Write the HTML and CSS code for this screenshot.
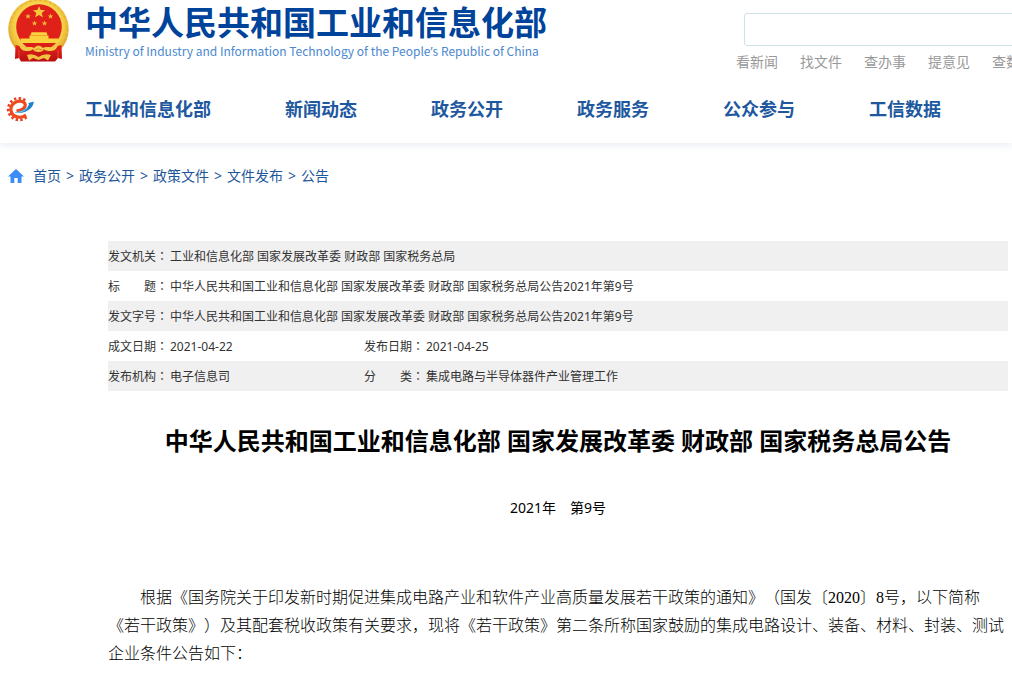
FILE: index.html
```
<!DOCTYPE html>
<html lang="zh-CN">
<head>
<meta charset="utf-8">
<meta name="viewport" content="width=device-width, initial-scale=1">
<title>中华人民共和国工业和信息化部</title>
<link rel="stylesheet" href="styles.css">
</head>
<body>
<header class="header">
  <div class="masthead">
    <a class="brand" href="#">
      <svg class="emblem" viewBox="0 0 62 63" aria-hidden="true">
        <defs>
          <radialGradient id="gold" cx="50%" cy="45%" r="55%">
            <stop offset="70%" stop-color="#f7d44c"/>
            <stop offset="90%" stop-color="#e8b534"/>
            <stop offset="100%" stop-color="#d99d28"/>
          </radialGradient>
          <linearGradient id="cloth" x1="0" y1="0" x2="0" y2="1">
            <stop offset="0" stop-color="#e3261c"/>
            <stop offset="1" stop-color="#b80f10"/>
          </linearGradient>
        </defs>
        <circle cx="30.5" cy="29" r="30.3" fill="url(#gold)"/>
        <circle cx="30.5" cy="29" r="28.5" fill="none" stroke="#dda632" stroke-width="1" stroke-dasharray="2 3"/>
        <path d="M7.500 45 L20 48 L30.500 46 L41 48 L53.500 45 L54 59 L50 58 L47 61.500 L13 61.500 L11 58 L7 59Z" fill="url(#cloth)"/>
        <circle cx="31" cy="27" r="22.8" fill="#df2119"/>
        <path d="M13.500 42 H49 C44 48 38 50 31 50 S18 48 13.500 42Z" fill="#dc1f19"/>
        <path d="M31 6l1.700 4 4.400.3-3.400 2.700 1.200 4.300-3.900-2.400-3.900 2.400 1.200-4.300-3.400-2.700 4.400-.3z" fill="#f8c83a"/>
        <g fill="#f3b735">
          <path d="M20 13.500l.8 1.900 2 .1-1.600 1.200.6 2-1.800-1.100-1.800 1.100.6-2-1.600-1.200 2-.1z"/>
          <path d="M42.500 13.500l.8 1.900 2 .1-1.600 1.200.6 2-1.800-1.100-1.800 1.100.6-2-1.600-1.200 2-.1z"/>
          <path d="M26.500 20.500l.8 1.900 2 .1-1.600 1.200.6 2-1.800-1.100-1.800 1.100.6-2-1.600-1.200 2-.1z"/>
          <path d="M36.500 20.500l.8 1.900 2 .1-1.600 1.200.6 2-1.800-1.100-1.800 1.100.6-2-1.600-1.200 2-.1z"/>
        </g>
        <path d="M23.500 32.200h15l1 3H22.500z M21.500 35.500h19v3h10V43H12.500v-4.500h9z" fill="#fbd13d"/>
        <path d="M22.500 35.500h17" stroke="#e7a52b" stroke-width=".6"/>
        <path d="M11 44 C17 50 22 45 26 48 Q30.500 43 35 48 C39 45 44 50 50 44 Q49 51 43 51 Q37 51 36 49 Q35 52 30.500 52 Q26 52 25 49 Q24 51 18 51 Q12 51 11 44Z" fill="#f4ca48"/>
        <path d="M27 50 Q30.500 47.500 34 50" fill="none" stroke="#dd8e23"/>
        <path d="M19 55 Q25 53 30.500 57 Q36 53 43 55 L40 60.500 L36 58 L30.500 60 L25 58 L21 60.500Z" fill="#f2c142"/>
        <path d="M11 50v8M50 50v8" stroke="#ee4537" stroke-width="1"/>
      </svg>
      <span class="brand-text">
        <span class="brand-name">中华人民共和国工业和信息化部</span>
        <span class="brand-sub">Ministry of Industry and Information Technology of the People<span class="apos">’</span>s Republic of China</span>
      </span>
    </a>
    <form class="search">
      <input class="search-box" type="text" aria-label="搜索">
      <div class="quick">
        <a href="#">看新闻</a>
        <a href="#">找文件</a>
        <a href="#">查办事</a>
        <a href="#">提意见</a>
        <a href="#">查数据</a>
      </div>
    </form>
  </div>
  <nav class="nav" aria-label="主导航">
    <a class="nav-logo" href="#" aria-label="工信微报">
      <svg viewBox="0 0 30 28" aria-hidden="true">
        <path d="M21.500 22 A10.800 10.800 0 1 1 20.500 5.500" fill="none" stroke="#e8401c" stroke-width="2.800" stroke-dasharray="2.400 2.200"/>
        <path d="M21 20 C16 24 7 22.500 6 15.500 C5 8.500 13 4 18.500 7.200 C22.500 9.700 19.500 15 11.500 15.800" fill="none" stroke="#ee4b1f" stroke-width="3.200"/>
        <path d="M10 17.600 C18 19.500 28.500 14.500 28.800 6.500 L23.500 8 C25.500 11 19 16 10 17.600Z" fill="#1c83cb"/>
        <path d="M10 17.600 C16 17.600 20 15.500 22.500 13" fill="none" stroke="#83c9ec" stroke-width="1"/>
      </svg>
    </a>
    <a href="#">工业和信息化部</a>
    <a href="#">新闻动态</a>
    <a href="#">政务公开</a>
    <a href="#">政务服务</a>
    <a href="#">公众参与</a>
    <a href="#">工信数据</a>
  </nav>
</header>

<nav class="crumbs" aria-label="当前位置">
  <svg class="home" viewBox="0 0 16 14" aria-hidden="true"><path d="M8 0 L16 7.500 H13.500 V14 H9.700 V9 H6.300 V14 H2.500 V7.500 H0Z" fill="#3d8bf5"/></svg>
  <a href="#">首页</a><span class="sep">&gt;</span>
  <a href="#">政务公开</a><span class="sep">&gt;</span>
  <a href="#">政策文件</a><span class="sep">&gt;</span>
  <a href="#">文件发布</a><span class="sep">&gt;</span>
  <a href="#">公告</a>
</nav>

<main class="content">
  <table class="meta">
    <colgroup><col class="c-label"><col class="c-value"><col class="c-label"><col></colgroup>
    <tr><th scope="row">发文机关<span class="colon" lang="zh-TW">：</span></th><td colspan="3">工业和信息化部 国家发展改革委 财政部 国家税务总局</td></tr>
    <tr><th scope="row">标　　题<span class="colon" lang="zh-TW">：</span></th><td colspan="3">中华人民共和国工业和信息化部 国家发展改革委 财政部 国家税务总局公告2021年第9号</td></tr>
    <tr><th scope="row">发文字号<span class="colon" lang="zh-TW">：</span></th><td colspan="3">中华人民共和国工业和信息化部 国家发展改革委 财政部 国家税务总局公告2021年第9号</td></tr>
    <tr><th scope="row">成文日期<span class="colon" lang="zh-TW">：</span></th><td>2021-04-22</td><th scope="row">发布日期<span class="colon" lang="zh-TW">：</span></th><td>2021-04-25</td></tr>
    <tr><th scope="row">发布机构<span class="colon" lang="zh-TW">：</span></th><td>电子信息司</td><th scope="row">分　　类<span class="colon" lang="zh-TW">：</span></th><td>集成电路与半导体器件产业管理工作</td></tr>
  </table>
  <h1 class="title">中华人民共和国工业和信息化部 国家发展改革委 财政部 国家税务总局公告</h1>
  <p class="number">2021年　第9号</p>
  <p class="body-text">根据《国务院关于印发新时期促进集成电路产业和软件产业高质量发展若干政策的通知》（国发〔2020〕8号，以下简称《若干政策》）及其配套税收政策有关要求，现将《若干政策》第二条所称国家鼓励的集成电路设计、装备、材料、封装、测试企业条件公告如下：</p>
</main>
</body>
</html>
```
FILE: styles.css
```
* {
  box-sizing: border-box;
}

body {
  margin: 0;
  overflow-x: hidden;
  background: #fff;
  color: #333;
  font-family: "Noto Sans", "Noto Sans CJK SC", sans-serif;
  font-size: 14px;
  line-height: 20px;
  text-spacing-trim: space-all;
}

a {
  color: inherit;
  text-decoration: none;
  white-space: nowrap;
}

.header {
  height: 143px;
  background: #fff;
  box-shadow: 0 2px 8px #e6ecf4;
}

.masthead {
  display: flex;
  justify-content: space-between;
  height: 76px;
  overflow: hidden;
}

.brand {
  display: flex;
  flex: none;
  gap: 15px;
  padding-left: 8px;
}

.emblem {
  width: 62px;
  height: 63px;
}

.brand-text {
  display: flex;
  flex-direction: column;
  font-family: "Noto Sans CJK SC", sans-serif;
}

.brand-name {
  color: #00439a;
  font-size: 33px;
  font-weight: 700;
  line-height: 42px;
}

.brand-sub {
  color: #4a88cf;
  font-size: 12px;
  line-height: 17px;
}

.apos {
  font-family: "Noto Sans", sans-serif;
}

.search {
  flex: none;
  width: 276px;
  padding-top: 13px;
}

.search-box {
  display: block;
  width: 400px;
  height: 33px;
  margin-left: 8px;
  border: 1px solid #cfdfea;
  border-radius: 3px;
  background: #fff;
}

.quick {
  display: flex;
  gap: 22px;
  padding-top: 6px;
  color: #999;
}

.nav {
  display: flex;
  align-items: center;
  gap: 74px;
  height: 66px;
  overflow: hidden;
  color: #2058a0;
  font-size: 18px;
  font-weight: 700;
  line-height: 26px;
}

.nav-logo {
  flex: none;
  width: 30px;
  height: 28px;
  margin: 0 -24px 0 5px;
}

.nav-logo svg {
  display: block;
}

.crumbs {
  display: flex;
  align-items: center;
  padding: 23px 8px 0;
  color: #1e5799;
}

.home {
  width: 16px;
  height: 14px;
  margin-right: 9px;
}

.sep {
  padding: 0 5px;
}

.content {
  padding: 55px 4px 0 108px;
}

.meta {
  width: 100%;
  border-collapse: collapse;
  table-layout: fixed;
  font-size: 12px;
  line-height: 20px;
}

.meta tr:nth-child(odd) {
  background: #f0f0f0;
}

.meta th,
.meta td {
  height: 30px;
  padding: 6px 0 4px;
  font-weight: 400;
  text-align: left;
  vertical-align: baseline;
}

.c-label {
  width: 62px;
}

.c-value {
  width: 194px;
}

.colon {
  font-family: "Noto Sans CJK TC", sans-serif;
  line-height: 1;
}

.title {
  margin: 32px 0 0;
  color: #000;
  font-size: 24px;
  line-height: 36px;
  text-align: center;
}

.number {
  margin: 39px 0 0;
  color: #000;
  text-align: center;
}

.body-text {
  margin: 66px 0 0;
  color: #000;
  font-family: "Liberation Serif", "Noto Sans CJK SC", serif;
  font-size: 16px;
  font-weight: 300;
  line-height: 28px;
  text-indent: 2em;
}
```
